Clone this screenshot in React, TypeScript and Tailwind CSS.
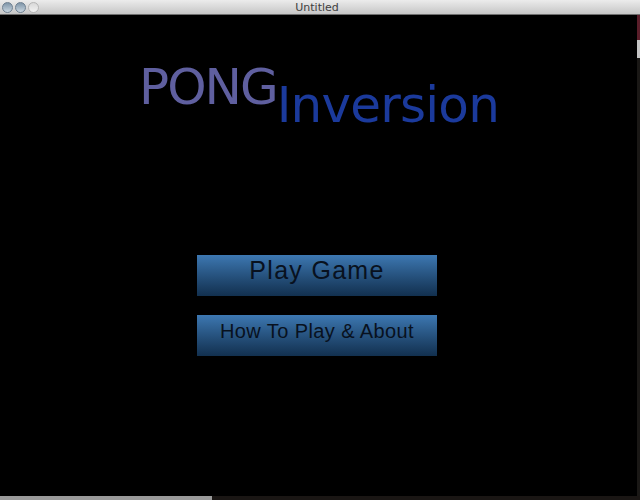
import React from 'react';

const MenuButton: React.FC<{ label: string; big?: boolean }> = ({ label, big }) => (
  <button
    className={
      'w-[240px] h-[41px] flex items-center justify-center pb-[10px] bg-gradient-to-b from-[#3d78b2] to-[#12304f] text-[#08111e] font-["Liberation_Sans",Arial,sans-serif] ' +
      (big ? 'text-[25px] tracking-[1.3px]' : 'text-[20px] tracking-[0.4px]')
    }
  >
    {label}
  </button>
);

const TrafficLight: React.FC = () => (
  <span className="w-[11px] h-[11px] rounded-full bg-gradient-to-b from-[#7f95a8] to-[#c9d6e0] border border-[#6d7f90]" />
);

export default function App() {
  return (
    <div className="w-[640px] h-[500px] flex flex-col bg-black overflow-hidden">
      <div className="h-[15px] flex items-center bg-gradient-to-b from-[#ececec] to-[#c6c6c6] border-b border-[#6e6e6e]">
        <div className="flex gap-[2px] pl-[2px]">
          <TrafficLight />
          <TrafficLight />
          <span className="w-[11px] h-[11px] rounded-full bg-gradient-to-b from-[#d8d8d8] to-[#f2f2f2] border border-[#b5b5b5]" />
        </div>
        <div className="flex-1 text-center text-[11px] leading-none text-[#404040] font-['Lucida_Grande','DejaVu_Sans',sans-serif] pr-[45px]">
          Untitled
        </div>
      </div>
      <div className="flex-1 flex">
        <div className="flex-1 flex flex-col items-start">
          <div className="pl-[139px] pt-[42px] whitespace-nowrap font-['DejaVu_Sans',sans-serif] text-[50px] leading-[60px]">
            <span className="text-[#5f5f9f] tracking-[-2px]">PONG</span>
            <span className="text-[#1b3a9c] align-[-18px] tracking-[-0.8px]">Inversion</span>
          </div>
          <div className="pl-[197px] pt-[120px] flex flex-col gap-[19px]">
            <MenuButton label="Play Game" big />
            <MenuButton label="How To Play & About" />
          </div>
        </div>
        <div className="w-[3px] flex flex-col">
          <div className="h-[25px] bg-[#5a1e2a]" />
          <div className="h-[18px] bg-[#c4c4c4]" />
          <div className="flex-1 bg-[#1a1816]" />
        </div>
      </div>
      <div className="h-[4px] flex">
        <div className="w-[212px] bg-[#9a9a9a]" />
        <div className="flex-1 bg-[#1a1614]" />
      </div>
    </div>
  );
}
